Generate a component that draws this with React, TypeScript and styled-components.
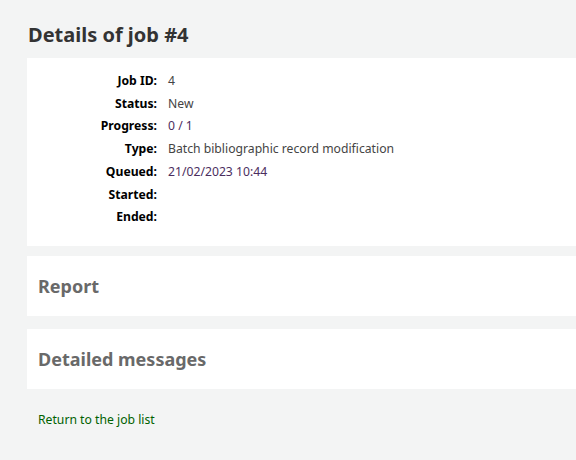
import * as React from "react";
import styled, { createGlobalStyle } from "styled-components";

const GlobalStyle = createGlobalStyle`
  html, body {
    margin: 0;
    padding: 0;
    background: #f3f4f4;
    overflow: hidden;
  }
  body {
    font-family: "Noto Sans", "Open Sans", sans-serif;
    color: #333;
  }
`;

const Page = styled.main`
  padding: 21px 0 30px 27px;
  display: flex;
  flex-direction: column;
`;

const Title = styled.h1`
  margin: 0 0 9px 1px;
  font-size: 20px;
  line-height: 28px;
  font-weight: 700;
  color: #333;
`;

const Panel = styled.section<{ $compact?: boolean; $gap?: number }>`
  background: #fff;
  padding: ${(p) => (p.$compact ? "16px 11px" : "12px 0 17px")};
  margin-bottom: ${(p) => p.$gap ?? 10}px;
`;

const List = styled.dl`
  margin: 0;
  display: grid;
  grid-template-columns: 130px 1fr;
  column-gap: 11px;
  font-size: 12.2px;
  line-height: 22.7px;
`;

const Label = styled.dt`
  text-align: right;
  font-weight: 700;
  color: #000;
`;

const Value = styled.dd<{ $accent?: boolean }>`
  margin: 0;
  color: ${(p) => (p.$accent ? "#4b2d5e" : "#444")};
  min-height: 22.7px;
`;

const SectionTitle = styled.h2`
  margin: 0;
  font-size: 18px;
  line-height: 28px;
  font-weight: 700;
  color: #696969;
`;

const BackLink = styled.a`
  align-self: flex-start;
  margin: 11px 0 0 11px;
  font-size: 12.2px;
  line-height: 18px;
  color: #006100;
  text-decoration: none;
`;

interface Field {
  label: string;
  value: string;
  accent?: boolean;
}

const fields: Field[] = [
  { label: "Job ID:", value: "4" },
  { label: "Status:", value: "New" },
  { label: "Progress:", value: "0 / 1", accent: true },
  { label: "Type:", value: "Batch bibliographic record modification" },
  { label: "Queued:", value: "21/02/2023 10:44", accent: true },
  { label: "Started:", value: "" },
  { label: "Ended:", value: "" },
];

const App = (): JSX.Element => (
  <>
    <GlobalStyle />
    <Page>
      <Title>Details of job #4</Title>
      <Panel>
        <List>
          {fields.map((f: Field) => (
            <React.Fragment key={f.label}>
              <Label>{f.label}</Label>
              <Value $accent={f.accent}>{f.value}</Value>
            </React.Fragment>
          ))}
        </List>
      </Panel>
      <Panel $compact $gap={13}>
        <SectionTitle>Report</SectionTitle>
      </Panel>
      <Panel $compact $gap={11}>
        <SectionTitle>Detailed messages</SectionTitle>
      </Panel>
      <BackLink href="#">Return to the job list</BackLink>
    </Page>
  </>
);

export default App;
